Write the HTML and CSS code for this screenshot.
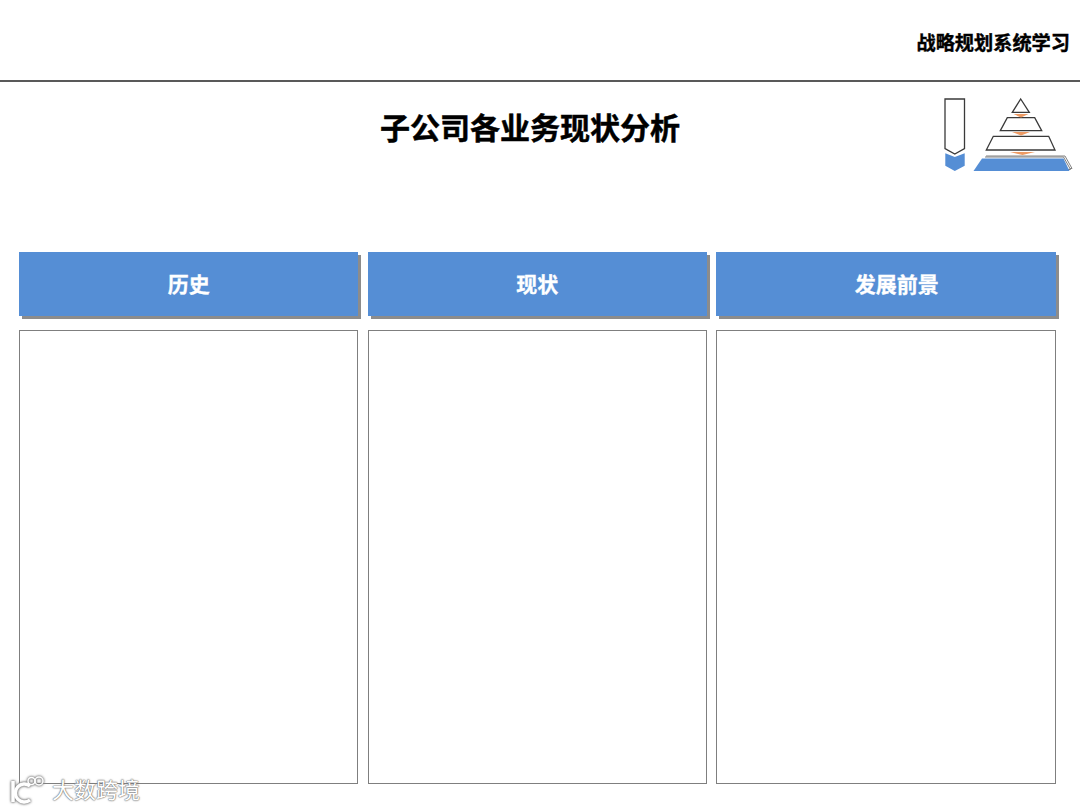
FILE: index.html
```html
<!DOCTYPE html>
<html lang="zh-CN">
<head>
<meta charset="utf-8">
<title>子公司各业务现状分析</title>
<link rel="stylesheet" href="styles.css">
</head>
<body>
<div class="slide">
  <header class="topbar"><span class="topbar-title">战略规划系统学习</span></header>
  <section class="title-row">
    <h1 class="title">子公司各业务现状分析</h1>
    <svg class="pyramid" width="130" height="78" viewBox="941 97 130 78" aria-hidden="true">
      <path class="outline" d="M945 99H964.500V148.500L954.800 154L945 148.500Z"/>
      <path class="blue" d="M945.300 153.300L954.800 157L964.700 153.300V165.700L954.800 171L945.300 165.700Z"/>
      <path class="sheet" d="M986 156H1065L1072 168.500H1066"/>
      <path class="sheet" d="M985 157H1063.500L1070.500 169.500H1064"/>
      <path class="blue" d="M982 158.500H1063.500L1069.500 171H973.500Z"/>
      <path class="outline" d="M1020.700 99L1029.300 112.300H1012.300Z"/>
      <path class="outline" d="M1007.300 117.700H1034.700L1041.700 130.700H1000.300Z"/>
      <path class="outline" d="M993.300 136.300H1048.700L1055 150H986.300Z"/>
      <path class="orange" d="M1013.500 114H1028.500L1021 117.500Z"/>
      <path class="orange" d="M1012 132H1030L1021 135.500Z"/>
      <path class="orange" d="M1010 152H1035L1022.500 155Z"/>
    </svg>
  </section>
  <main class="columns">
    <section class="col">
      <h2 class="col-head">历史</h2>
      <div class="col-body"></div>
    </section>
    <section class="col">
      <h2 class="col-head">现状</h2>
      <div class="col-body"></div>
    </section>
    <section class="col">
      <h2 class="col-head col-head-shifted">发展前景</h2>
      <div class="col-body"></div>
    </section>
  </main>
  <div class="watermark">
    <svg class="wm-logo" width="44" height="30" viewBox="0 0 44 30" aria-hidden="true">
      <path class="wm-stroke" d="M5 5V26"/>
      <path class="wm-stroke" d="M22 10A9 9 0 1 0 22 24"/>
      <circle class="wm-thin" cx="23.500" cy="5" r="3.500"/>
      <circle class="wm-thin" cx="31" cy="5" r="4"/>
    </svg>
    <span class="wm-text">大数跨境</span>
  </div>
</div>
</body>
</html>
```

FILE: styles.css
```css
* {
  box-sizing: border-box;
}

html,
body {
  margin: 0;
  padding: 0;
  background: #fff;
}

.slide {
  position: relative;
  width: 1080px;
  height: 810px;
  overflow: hidden;
  font-family: "Liberation Sans", "Noto Sans CJK SC", sans-serif;
  color: #000;
}

.topbar {
  display: flex;
  justify-content: flex-end;
  align-items: flex-start;
  height: 82px;
  padding: 32px 10px 0 0;
  border-bottom: 2px solid #595959;
}

.topbar-title {
  font-size: 19.200px;
  line-height: 24px;
  font-weight: 700;
  -webkit-text-stroke: 0.400px #000;
}

.title-row {
  display: flex;
  justify-content: space-between;
  align-items: flex-start;
  height: 170px;
  padding: 15px 9px 0 380px;
}

.title {
  margin: 13px 0 0;
  font-size: 30px;
  line-height: 38px;
  font-weight: 700;
  -webkit-text-stroke: 0.500px #000;
}

.pyramid {
  flex: none;
  overflow: visible;
}

.outline {
  fill: #fff;
  stroke: #3a3a3a;
  stroke-width: 1.300;
}

.blue {
  fill: #558ed5;
}

.orange {
  fill: #ed9a63;
}

.sheet {
  fill: #fff;
  stroke: #808080;
  stroke-width: 1;
}

.columns {
  display: grid;
  grid-template-columns: repeat(3, 339.400px);
  column-gap: 9.200px;
  padding-left: 19px;
}

.col {
  display: flex;
  flex-direction: column;
  gap: 14px;
}

.col-head {
  display: flex;
  align-items: center;
  justify-content: center;
  height: 64px;
  padding-bottom: 2px;
  margin: 0;
  background: #558ed5;
  box-shadow: 3px 3px 0 #8c8c8c;
  color: #fff;
  font-size: 21px;
  font-weight: 700;
  -webkit-text-stroke: 0.300px #fff;
}

.col-head-shifted {
  padding-left: 22px;
}

.col-body {
  height: 454px;
  border: 1px solid #7f7f7f;
  background: #fff;
}

.watermark {
  position: absolute;
  left: 8px;
  top: 775px;
  display: flex;
  align-items: center;
  height: 32px;
}

.wm-logo {
  flex: none;
  filter: drop-shadow(0 0 1px #777) drop-shadow(0 0 1px #999);
}

.wm-stroke {
  fill: none;
  stroke: #fff;
  stroke-width: 3.500;
}

.wm-thin {
  fill: none;
  stroke: #fff;
  stroke-width: 1.500;
}

.wm-text {
  font-size: 22px;
  line-height: 28px;
  color: #fff;
  text-shadow: 0 0 2px #777, 0 0 1px #777, 0 0 1px #777;
}
```
